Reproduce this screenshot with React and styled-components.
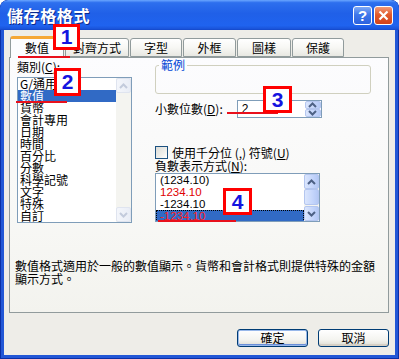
import styled, { createGlobalStyle } from 'styled-components'

const GlobalStyle = createGlobalStyle`
  html, body {
    margin: 0;
    padding: 0;
    background: #ffffff;
  }
  body {
    font-family: "Noto Sans CJK TC", "Liberation Sans", sans-serif;
    font-size: 12px;
    color: #000000;
  }
`

const Window = styled.div`
  position: relative;
  width: 399px;
  height: 359px;
  box-sizing: border-box;
  display: flex;
  flex-direction: column;
  background: #2257d6;
  border-radius: 8px 8px 0 0;
  box-shadow: inset 0 0 0 1px #0b2fa6;
  overflow: hidden;
`

const TitleBar = styled.div`
  flex: none;
  height: 30px;
  display: flex;
  align-items: center;
  padding: 0 6px 0 7px;
  background: linear-gradient(180deg, #6aa6ff 0%, #2d6fee 9%, #2060e8 45%, #1f63ef 85%, #1a55dc 95%, #1447c8 100%);
  border-radius: 8px 8px 0 0;
`

const Title = styled.div`
  flex: 1;
  color: #ffffff;
  font-weight: bold;
  font-size: 16px;
  letter-spacing: 0.6px;
  text-shadow: 1px 1px 0 #0c2a8c;
  line-height: 20px;
`

const CaptionButton = styled.div`
  width: 19px;
  height: 19px;
  margin-left: 2px;
  box-sizing: border-box;
  border: 1px solid #ffffff;
  border-radius: 3px;
  display: flex;
  align-items: center;
  justify-content: center;
  color: #ffffff;
  font-family: "Liberation Sans", sans-serif;
  font-weight: bold;
  font-size: 15px;
  background: ${p => p.$close
    ? 'linear-gradient(180deg, #f29a78 0%, #e25a2c 45%, #d2421a 100%)'
    : 'linear-gradient(180deg, #7fa9f5 0%, #3f77ea 45%, #2c62de 100%)'};
`

const Body = styled.div`
  flex: 1;
  margin: 0 4px 4px;
  background: #eeede8;
  display: flex;
  flex-direction: column;
`

const TabStrip = styled.div`
  display: flex;
  align-items: flex-end;
  height: 21px;
  margin-top: 6px;
  padding-left: 6px;
  gap: 1px;
`

const Tab = styled.div`
  position: relative;
  box-sizing: border-box;
  width: ${p => p.$w}px;
  height: ${p => (p.$active ? 22 : 19)}px;
  margin-bottom: ${p => (p.$active ? -1 : 0)}px;
  z-index: ${p => (p.$active ? 2 : 0)};
  border: 1px solid #919b9c;
  border-bottom: ${p => (p.$active ? 'none' : '1px solid #919b9c')};
  border-top: ${p => (p.$active ? '3px solid #f5a836' : '1px solid #919b9c')};
  border-radius: 3px 3px 0 0;
  background: ${p => (p.$active
    ? '#fcfcfe'
    : 'linear-gradient(180deg, #ffffff 0%, #f7f7f4 50%, #e8e8e2 100%)')};
  display: flex;
  align-items: center;
  justify-content: center;
  font-size: 12px;
  line-height: 17px;
  padding-bottom: ${p => (p.$active ? 2 : 0)}px;
`

const Panel = styled.div`
  box-sizing: border-box;
  width: 380px;
  height: 256px;
  margin-left: 5px;
  border: 1px solid #919b9c;
  background: linear-gradient(180deg, #fcfcfe 0%, #f8f8f6 60%, #f3f3ee 100%);
  display: flex;
  flex-direction: column;
`

const TopArea = styled.div`
  display: flex;
  padding-left: 7px;
  gap: 23px;
`

const LeftCol = styled.div`
  width: 115px;
  display: flex;
  flex-direction: column;
  padding-top: 1px;
`

const RightCol = styled.div`
  display: flex;
  flex-direction: column;
`

const Label = styled.div`
  line-height: ${p => p.$lh || 16}px;
  font-size: 12px;
  white-space: nowrap;
`

const ListBox = styled.div`
  box-sizing: border-box;
  width: ${p => p.$w}px;
  height: ${p => p.$h}px;
  margin-top: ${p => p.$mt || 0}px;
  border: 1px solid #7f9db9;
  background: #ffffff;
  display: flex;
`

const ListItems = styled.div`
  flex: 1;
  padding-top: ${p => p.$pt || 0}px;
  overflow: hidden;
`

const ListItem = styled.div`
  height: 12px;
  line-height: 12px;
  padding-left: ${p => p.$pl || 2}px;
  white-space: nowrap;
  font-size: ${p => (p.$num ? 11.5 : 12)}px;
  font-family: ${p => (p.$num ? '"Liberation Sans", sans-serif' : 'inherit')};
  color: ${p => (p.$selected ? (p.$red ? '#ff2020' : '#ffffff') : p.$red ? '#e00000' : '#000000')};
  background: ${p => (p.$selected ? '#316ac5' : 'transparent')};
  outline: ${p => (p.$focus ? '1px dotted #000000' : 'none')};
  outline-offset: -1px;
`

const ScrollBar = styled.div`
  width: 15px;
  display: flex;
  flex-direction: column;
  background: #f4f4f0;
`

const ScrollButton = styled.div`
  box-sizing: border-box;
  height: ${p => p.$h || 15}px;
  border: 1px solid ${p => (p.$disabled ? '#dfe4ef' : '#b4c6ef')};
  border-radius: 2px;
  background: ${p => (p.$disabled
    ? 'linear-gradient(90deg, #f4f6fb, #e9edf6)'
    : 'linear-gradient(90deg, #dbe6fd 0%, #c4d5fb 60%, #b4c8f5 100%)')};
  display: flex;
  align-items: center;
  justify-content: center;
`

const ScrollTrack = styled.div`
  flex: 1;
  background: #f4f4f0;
`

const Chevron = ({ down, color }) => (
  <svg width="9" height="6" viewBox="0 0 9 6">
    <polyline
      points={down ? '1,1 4.5,4.5 8,1' : '1,5 4.5,1.5 8,5'}
      fill="none"
      stroke={color}
      strokeWidth="2"
    />
  </svg>
)

const GroupBox = styled.fieldset`
  box-sizing: border-box;
  width: 216px;
  height: 36px;
  margin: 0;
  padding: 0;
  border: 1px solid #d0d0bf;
  border-radius: 3px;
`

const Legend = styled.legend`
  margin-left: 3px;
  padding: 0 2px;
  color: #0046d5;
  font-size: 12px;
  line-height: 14px;
`

const SpinRow = styled.div`
  display: flex;
  align-items: center;
  margin-top: 6px;
  height: 18px;
`

const SpinInput = styled.div`
  box-sizing: border-box;
  width: 85px;
  height: 18px;
  margin-left: 14px;
  border: 1px solid #7f9db9;
  background: #ffffff;
  display: flex;
  font-family: "Liberation Sans", sans-serif;
  font-size: 12px;
`

const SpinValue = styled.div`
  flex: 1;
  padding-left: 4px;
  line-height: 16px;
`

const SpinButtons = styled.div`
  width: 16px;
  display: flex;
  flex-direction: column;
  gap: 0;
`

const SpinHalf = styled(ScrollButton)`
  height: 8px;
`

const CheckRow = styled.div`
  display: flex;
  align-items: center;
  margin-top: 28px;
  height: 13px;
`

const CheckBox = styled.div`
  box-sizing: border-box;
  width: 13px;
  height: 13px;
  border: 1px solid #1c5180;
  background: linear-gradient(135deg, #dcdcd7 0%, #efefeb 60%, #ffffff 100%);
  margin-right: 4px;
`

const Description = styled.div`
  width: 364px;
  margin: 36px 0 0 5px;
  line-height: 13px;
  font-size: 12px;
`

const ButtonRow = styled.div`
  display: flex;
  justify-content: flex-end;
  gap: 10px;
  margin: 16px 6px 0 0;
`

const Button = styled.div`
  box-sizing: border-box;
  width: 71px;
  height: 18px;
  border: 1px solid #003c74;
  border-radius: 3px;
  background: linear-gradient(180deg, #ffffff 0%, #f4f4f0 60%, #dcdcd2 100%);
  box-shadow: ${p => (p.$default ? 'inset 0 0 0 1px #98b8ea, inset 0 -1px 0 1px #6a8fd8' : 'inset 0 -2px 0 #d6d0c5')};
  display: flex;
  align-items: center;
  justify-content: center;
  font-size: 12px;
  line-height: 14px;
`

const Marker = styled.div`
  position: absolute;
  left: ${p => p.$x}px;
  top: ${p => p.$y}px;
  width: ${p => p.$w}px;
  height: ${p => p.$h}px;
  box-sizing: border-box;
  border: 3px solid #ff0000;
  background: #ffffff;
  display: flex;
  align-items: center;
  justify-content: center;
  color: #1414e0;
  font-family: "Liberation Sans", sans-serif;
  font-weight: bold;
  font-size: 21px;
  z-index: 5;
`

const RedLine = styled.div`
  position: absolute;
  left: ${p => p.$x}px;
  top: ${p => p.$y}px;
  width: ${p => p.$w}px;
  height: 2px;
  background: #e8101c;
  z-index: 4;
`

const tabs = [
  { label: '數值', w: 54, active: true },
  { label: '對齊方式', w: 64 },
  { label: '字型', w: 52 },
  { label: '外框', w: 53 },
  { label: '圖樣', w: 54 },
  { label: '保護', w: 52 },
]

const categories = ['G/通用格式', '數值', '貨幣', '會計專用', '日期', '時間', '百分比', '分數', '科學記號', '文字', '特殊', '自訂']

const negatives = [
  { text: '(1234.10)' },
  { text: '1234.10', red: true },
  { text: '-1234.10' },
  { text: '-1234.10', red: true, selected: true },
]

const markers = [
  { n: 1, x: 53, y: 24, w: 27, h: 26 },
  { n: 2, x: 54, y: 68, w: 27, h: 28 },
  { n: 3, x: 263, y: 86, w: 29, h: 27 },
  { n: 4, x: 223, y: 188, w: 29, h: 27 },
]

const lines = [
  { x: 18, y: 56, w: 52 },
  { x: 16, y: 101, w: 51 },
  { x: 227, y: 112, w: 51 },
  { x: 158, y: 220, w: 78 },
]

const App = () => {
  return (
    <Window>
      <GlobalStyle />
      <TitleBar>
        <Title>儲存格格式</Title>
        <CaptionButton>?</CaptionButton>
        <CaptionButton $close>
          <svg width="11" height="11" viewBox="0 0 11 11">
            <path d="M1.5 1.5 L9.5 9.5 M9.5 1.5 L1.5 9.5" stroke="#ffffff" strokeWidth="2.2" />
          </svg>
        </CaptionButton>
      </TitleBar>
      <Body>
        <TabStrip>
          {tabs.map(t => (
            <Tab key={t.label} $w={t.w} $active={t.active}>{t.label}</Tab>
          ))}
        </TabStrip>
        <Panel>
          <TopArea>
            <LeftCol>
              <Label>類別(<u>C</u>):</Label>
              <ListBox $w={115} $h={146} $mt={2}>
                <ListItems $pt={0}>
                  {categories.map(c => (
                    <ListItem key={c} $selected={c === '數值'}>{c}</ListItem>
                  ))}
                </ListItems>
                <ScrollBar>
                  <ScrollButton $disabled><Chevron color="#c3cbdc" /></ScrollButton>
                  <ScrollTrack />
                  <ScrollButton $disabled><Chevron down color="#c3cbdc" /></ScrollButton>
                </ScrollBar>
              </ListBox>
            </LeftCol>
            <RightCol>
              <GroupBox>
                <Legend>範例</Legend>
              </GroupBox>
              <SpinRow>
                <Label>小數位數(<u>D</u>):</Label>
                <SpinInput>
                  <SpinValue>2</SpinValue>
                  <SpinButtons>
                    <SpinHalf><Chevron color="#4d6185" /></SpinHalf>
                    <SpinHalf><Chevron down color="#4d6185" /></SpinHalf>
                  </SpinButtons>
                </SpinInput>
              </SpinRow>
              <CheckRow>
                <CheckBox />
                <Label $lh={13}>使用千分位 (,) 符號(<u>U</u>)</Label>
              </CheckRow>
              <Label $lh={13}>負數表示方式(<u>N</u>):</Label>
              <ListBox $w={165} $h={49} $mt={1}>
                <ListItems $pt={0}>
                  {negatives.map((n, i) => (
                    <ListItem key={i} $num $pl={4} $red={n.red} $selected={n.selected} $focus={n.selected}>
                      {n.text}
                    </ListItem>
                  ))}
                </ListItems>
                <ScrollBar>
                  <ScrollButton><Chevron color="#4d6185" /></ScrollButton>
                  <ScrollButton $h={16} />
                  <ScrollTrack />
                  <ScrollButton><Chevron down color="#4d6185" /></ScrollButton>
                </ScrollBar>
              </ListBox>
            </RightCol>
          </TopArea>
          <Description>
            數值格式適用於一般的數值顯示。貨幣和會計格式則提供特殊的金額顯示方式。
          </Description>
        </Panel>
        <ButtonRow>
          <Button $default>確定</Button>
          <Button>取消</Button>
        </ButtonRow>
      </Body>
      {lines.map((l, i) => (
        <RedLine key={i} $x={l.x} $y={l.y} $w={l.w} />
      ))}
      {markers.map(m => (
        <Marker key={m.n} $x={m.x} $y={m.y} $w={m.w} $h={m.h}>{m.n}</Marker>
      ))}
    </Window>
  )
}

export default App
